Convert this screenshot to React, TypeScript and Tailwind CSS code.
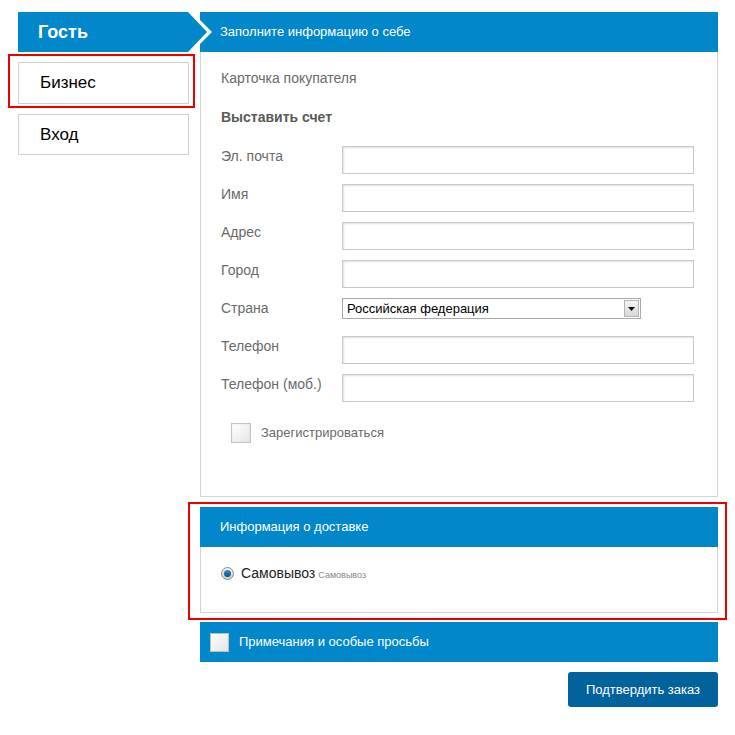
import React from 'react';

const fields = ['Эл. почта', 'Имя', 'Адрес', 'Город'];

function TextField({ label }: { label: string }) {
  return (
    <div className="flex items-start h-7 mb-[10px]">
      <div className="w-[121px] pt-[1px] text-[14px] leading-[18px] text-[#6a6a6a]">{label}</div>
      <div className="w-[352px] h-7 border border-[#c9c9c9] bg-white shadow-[inset_1px_1px_2px_rgba(0,0,0,0.12)]" />
    </div>
  );
}

export default function App() {
  return (
    <div className="w-[735px] h-[735px] bg-white pt-3 pl-[18px] flex gap-3 font-['Liberation_Sans',Arial,sans-serif]">
      {/* Left tabs */}
      <div className="w-[170px] flex flex-col">
        <div className="relative h-10 bg-[#0187ca] pl-5 flex items-center text-white text-[18px] font-bold">
          Гость
          <svg className="absolute left-full top-0 z-10" width="24" height="40" viewBox="0 0 24 40">
            <polygon points="0,0 4,0 24,20 4,40 0,40" fill="#ffffff" />
            <polygon points="-1,0 0,0 19,20 0,40 -1,40" fill="#0187ca" />
          </svg>
        </div>
        <div className="relative mt-[10px] h-[42px] w-[171px] border border-[#d0d0d0] pl-[21px] flex items-center text-[17px] text-black">
          Бизнес
          <span className="absolute -left-[11px] -top-[9px] -right-[7px] -bottom-[5px] border-2 border-[#ee0000]" />
        </div>
        <div className="mt-[10px] h-[41px] w-[171px] border border-[#d0d0d0] pl-[21px] flex items-center text-[17px] text-black">
          Вход
        </div>
      </div>

      {/* Main column */}
      <div className="w-[518px] flex flex-col">
        <div className="h-10 bg-[#0187ca] pl-5 flex items-center text-white text-[13px]">
          Заполните информацию о себе
        </div>
        <div className="h-[445px] border border-t-0 border-[#d4d4d4] pl-5 pt-[17px]">
          <div className="text-[14px] leading-[18px] text-[#6a6a6a]">Карточка покупателя</div>
          <div className="mt-[21px] text-[14px] leading-[18px] font-bold text-[#5a5a5a]">Выставить счет</div>
          <div className="mt-[20px]">
            {fields.map((f) => (
              <TextField key={f} label={f} />
            ))}
            <div className="flex items-start h-7 mb-[10px]">
              <div className="w-[121px] pt-[1px] text-[14px] leading-[18px] text-[#6a6a6a]">Страна</div>
              <div className="w-[299px] h-[21px] border border-[#a9a9a9] bg-white flex items-center">
                <span className="flex-1 pl-1 text-[13px] text-black">Российская федерация</span>
                <span className="w-[15px] h-[17px] mr-[1px] border border-[#b5b5b5] bg-gradient-to-b from-[#f4f4f4] to-[#d8d8d8] flex items-center justify-center">
                  <svg width="7" height="4" viewBox="0 0 7 4">
                    <polygon points="0,0 7,0 3.5,4" fill="#111" />
                  </svg>
                </span>
              </div>
            </div>
            <TextField label="Телефон" />
            <TextField label="Телефон (моб.)" />
          </div>
          <div className="mt-[21px] ml-[10px] flex items-center">
            <span className="w-5 h-5 border border-[#c4c4c4] bg-gradient-to-br from-white to-[#e6e6e6] shadow-[inset_0_0_2px_rgba(0,0,0,0.1)]" />
            <span className="ml-[10px] text-[13px] text-[#6a6a6a]">Зарегистрироваться</span>
          </div>
        </div>

        {/* Delivery */}
        <div className="relative mt-[10px]">
          <div className="h-10 bg-[#0187ca] pl-5 flex items-center text-white text-[13px]">
            Информация о доставке
          </div>
          <div className="h-[66px] border border-t-0 border-[#d4d4d4] pl-5 pt-[19px] flex items-start">
            <span className="mt-[1px] w-[13px] h-[13px] rounded-full border border-[#8a8a8a] bg-gradient-to-b from-[#f2f2f2] to-[#cfcfcf] flex items-center justify-center">
              <span className="w-[7px] h-[7px] rounded-full bg-gradient-to-b from-[#2d8fd0] to-[#0a4f86]" />
            </span>
            <span className="ml-[7px] text-[14px] leading-[15px] font-normal text-[#222]">Самовывоз</span>
            <span className="ml-[3px] mt-[3px] text-[9px] leading-[12px] text-[#888]">Самовывоз</span>
          </div>
          <span className="absolute -left-[12px] -top-[5px] -right-[9px] -bottom-[7px] border-2 border-[#ee0000]" />
        </div>

        {/* Notes */}
        <div className="mt-[9px] h-10 bg-[#0187ca] pl-[10px] flex items-center">
          <span className="w-[19px] h-[19px] border border-[#bdbdbd] bg-gradient-to-br from-white to-[#e3e3e3]" />
          <span className="ml-[10px] text-[13px] text-white">Примечания и особые просьбы</span>
        </div>

        <div className="mt-[10px] flex justify-end">
          <button className="w-[150px] h-[35px] rounded-[3px] bg-[#02629c] text-white text-[13px]">
            Подтвердить заказ
          </button>
        </div>
      </div>
    </div>
  );
}
